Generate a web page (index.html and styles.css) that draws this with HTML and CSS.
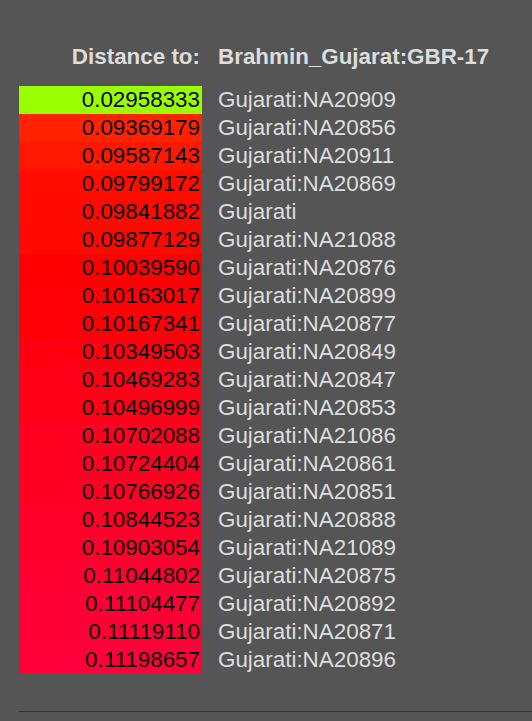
FILE: index.html
```html
<!doctype html>
<html lang="en-US">
<head>
<title>Distance</title>
<link rel="stylesheet" href="styles.css">
</head>
<body>
<div class="distwrapper">
<div class="dist-head">
	<div class="head-label">Distance to:</div>
	<div class="head-target">Brahmin_Gujarat:GBR-17</div>
</div>
<div class="dist-list">
	<div class="dist-val" style="background:hsl(84,100%,50%)">0.02958333</div><div class="dist-name">Gujarati:NA20909</div>
	<div class="dist-val" style="background:hsl(7.97,100%,50%)">0.09369179</div><div class="dist-name">Gujarati:NA20856</div>
	<div class="dist-val" style="background:hsl(5.38,100%,50%)">0.09587143</div><div class="dist-name">Gujarati:NA20911</div>
	<div class="dist-val" style="background:hsl(2.87,100%,50%)">0.09799172</div><div class="dist-name">Gujarati:NA20869</div>
	<div class="dist-val" style="background:hsl(2.36,100%,50%)">0.09841882</div><div class="dist-name">Gujarati</div>
	<div class="dist-val" style="background:hsl(1.94,100%,50%)">0.09877129</div><div class="dist-name">Gujarati:NA21088</div>
	<div class="dist-val" style="background:hsl(0.02,100%,50%)">0.10039590</div><div class="dist-name">Gujarati:NA20876</div>
	<div class="dist-val" style="background:hsl(-1.45,100%,50%)">0.10163017</div><div class="dist-name">Gujarati:NA20899</div>
	<div class="dist-val" style="background:hsl(-1.5,100%,50%)">0.10167341</div><div class="dist-name">Gujarati:NA20877</div>
	<div class="dist-val" style="background:hsl(-3.66,100%,50%)">0.10349503</div><div class="dist-name">Gujarati:NA20849</div>
	<div class="dist-val" style="background:hsl(-5.08,100%,50%)">0.10469283</div><div class="dist-name">Gujarati:NA20847</div>
	<div class="dist-val" style="background:hsl(-5.41,100%,50%)">0.10496999</div><div class="dist-name">Gujarati:NA20853</div>
	<div class="dist-val" style="background:hsl(-7.84,100%,50%)">0.10702088</div><div class="dist-name">Gujarati:NA21086</div>
	<div class="dist-val" style="background:hsl(-8.11,100%,50%)">0.10724404</div><div class="dist-name">Gujarati:NA20861</div>
	<div class="dist-val" style="background:hsl(-8.61,100%,50%)">0.10766926</div><div class="dist-name">Gujarati:NA20851</div>
	<div class="dist-val" style="background:hsl(-9.53,100%,50%)">0.10844523</div><div class="dist-name">Gujarati:NA20888</div>
	<div class="dist-val" style="background:hsl(-10.22,100%,50%)">0.10903054</div><div class="dist-name">Gujarati:NA21089</div>
	<div class="dist-val" style="background:hsl(-11.91,100%,50%)">0.11044802</div><div class="dist-name">Gujarati:NA20875</div>
	<div class="dist-val" style="background:hsl(-12.61,100%,50%)">0.11104477</div><div class="dist-name">Gujarati:NA20892</div>
	<div class="dist-val" style="background:hsl(-12.79,100%,50%)">0.11119110</div><div class="dist-name">Gujarati:NA20871</div>
	<div class="dist-val" style="background:hsl(-13.73,100%,50%)">0.11198657</div><div class="dist-name">Gujarati:NA20896</div>
</div>
<div class="dist-foot"></div>
</div>
</body>
</html>
```

FILE: styles.css
```css
html, body {
	margin: 0;
	height: 100%;
	background-color: #555555;
	font-family: "Liberation Sans", Arial, sans-serif;
	font-size: 22.4px;
	color: #dddddd;
}
.distwrapper {
	padding: 43px 0 0 19px;
}
.dist-head, .dist-list {
	display: grid;
	grid-template-columns: 183px auto;
	column-gap: 16px;
}
.dist-head {
	font-weight: bold;
	margin-bottom: 15px;
}
.head-label, .head-target, .dist-val, .dist-name {
	height: 28px;
	line-height: 26px;
	padding: 1px 0;
	box-sizing: border-box;
	white-space: nowrap;
}
.head-label, .dist-val {
	text-align: right;
	padding-right: 2px;
}
.dist-val {
	color: #000000;
}
.dist-foot {
	margin-top: 37px;
	border-top: 1px solid #333333;
}
```
